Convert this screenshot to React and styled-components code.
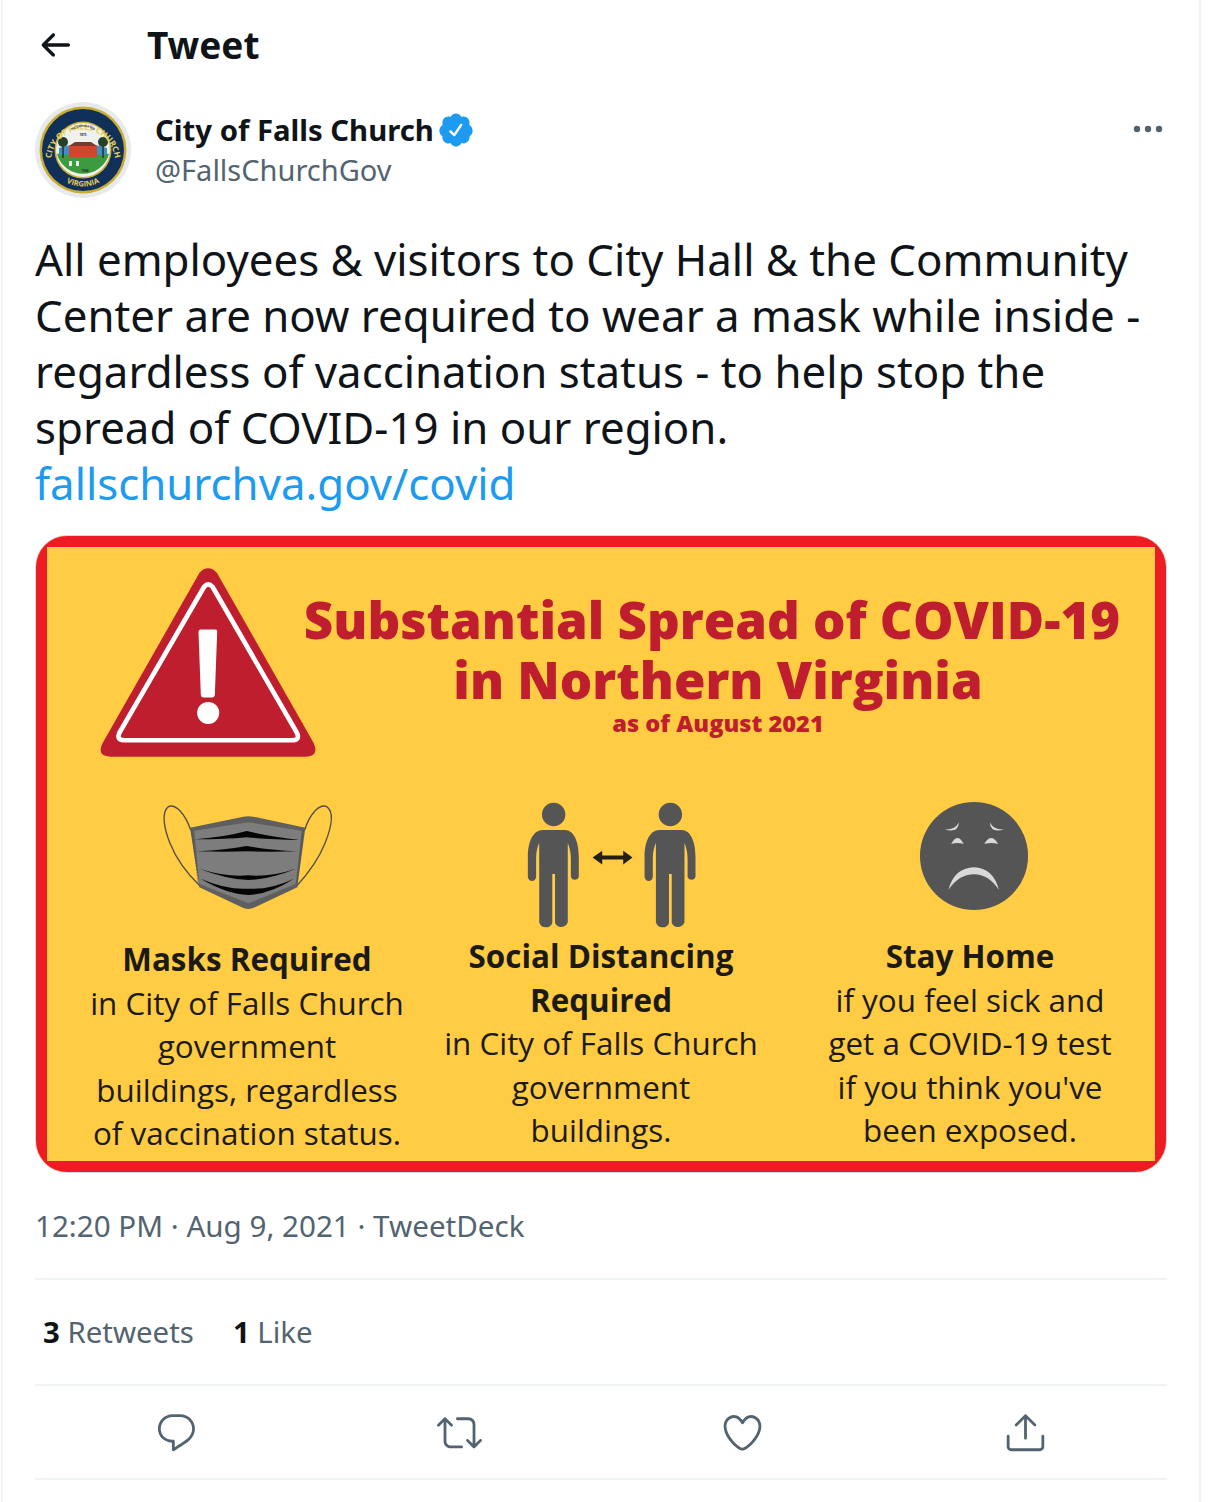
import React from "react";
import styled, { createGlobalStyle } from "styled-components";

const GlobalStyle = createGlobalStyle`
  html, body { margin: 0; padding: 0; background: #fff; }
  body { font-family: "Noto Sans", "Liberation Sans", sans-serif; color: #0f1419; }
  * { box-sizing: border-box; }
`;

// Main timeline column
const Column = styled.div`
  width: 1200px;
  height: 1502px;
  margin-left: 1px;
  padding: 0 32px;
  border-left: 2px solid #eff3f4;
  border-right: 2px solid #eff3f4;
  overflow: hidden;
`;

const Header = styled.header`
  height: 90px;
  display: flex;
  align-items: center;
`;

const BackIcon = styled.svg`
  width: 40px;
  height: 40px;
  margin-right: 72px;
  fill: #0f1419;
`;

const HeaderTitle = styled.h1`
  margin: 0;
  font-size: 37px;
  line-height: 46px;
  font-weight: 700;
`;

const AuthorRow = styled.div`
  display: flex;
  align-items: flex-start;
  gap: 24px;
  margin-top: 12px;
`;

const Avatar = styled.svg`
  width: 96px;
  height: 96px;
  flex: none;
`;

const AuthorText = styled.div`
  flex: 1;
  padding-top: 7px;
`;

const NameRow = styled.div`
  display: flex;
  align-items: center;
  gap: 3px;
  height: 41px;
  font-size: 29.3px;
  font-weight: 700;
`;

const Verified = styled.svg`
  width: 38px;
  height: 38px;
  fill: #1d9bf0;
`;

const Handle = styled.div`
  height: 40px;
  line-height: 40px;
  font-size: 29px;
  color: #536471;
`;

const MoreIcon = styled.svg`
  width: 34px;
  height: 12px;
  margin-top: 21px;
  margin-right: 2px;
  fill: #536471;
`;

const TweetText = styled.p`
  margin: 33px 0 24px;
  font-size: 43.8px;
  line-height: 56px;
`;

const TweetLink = styled.span`
  color: #1d9bf0;
`;

// Infographic card
const Card = styled.div`
  height: 638px;
  border: 1px solid #cfd9de;
  border-radius: 32px;
  overflow: hidden;
`;

const Poster = styled.div`
  height: 100%;
  background: #ffcc44;
  border: 11px solid #ed1c24;
  font-family: "Open Sans", "Liberation Sans", sans-serif;
`;

const PosterHead = styled.div`
  display: flex;
  align-items: flex-start;
  padding: 19px 0 0 53px;
`;

const Warning = styled.svg`
  width: 217px;
  height: 192px;
  flex: none;
`;

const Headline = styled.div`
  width: 830px;
  margin: 23px 0 0 -20px;
  text-align: center;
  color: #be1e2d;
  font-weight: 800;
`;

const HeadLine = styled.div`
  padding-left: ${({ $indent }) => $indent || 0}px;
  font-size: 51px;
  line-height: 60px;
`;

const AsOf = styled.div`
  margin-top: 2px;
  padding-left: 12px;
  font-size: 23.6px;
  line-height: 24px;
`;

const PosterBody = styled.div`
  display: grid;
  grid-template-columns: 320px 320px 320px;
  column-gap: 34px;
  margin-top: 31px;
  padding-left: 40px;
`;

const Notice = styled.div`
  width: 320px;
  text-align: center;
  color: #1c1a14;
  font-size: 31.4px;
  line-height: 43.5px;
  margin-left: ${({ $shift }) => $shift || 0}px;
`;

const NoticeIcon = styled.svg`
  display: block;
  width: ${({ $w }) => $w}px;
  height: ${({ $h }) => $h}px;
  margin: ${({ $top }) => $top || 0}px auto ${({ $bottom }) => $bottom || 0}px;
`;

const NoticeTitle = styled.div`
  font-weight: 700;
  margin-top: ${({ $gap }) => $gap || 0}px;
`;

const Meta = styled.div`
  height: 107px;
  display: flex;
  align-items: center;
  font-size: 29.6px;
  color: #536471;
  border-bottom: 2px solid #eff3f4;
`;

const Stats = styled.div`
  height: 106px;
  display: flex;
  align-items: center;
  gap: 39px;
  padding-left: 8px;
  font-size: 29.4px;
  color: #536471;
  border-bottom: 2px solid #eff3f4;
`;

const Count = styled.b`
  color: #0f1419;
`;

const Actions = styled.div`
  height: 94px;
  display: grid;
  grid-template-columns: repeat(4, 283px);
  border-bottom: 2px solid #eff3f4;
`;

const Action = styled.div`
  display: flex;
  align-items: center;
  justify-content: center;
`;

const ActionIcon = styled.svg`
  width: 45px;
  height: 45px;
  fill: #536471;
`;

const Seal = () => (
  <Avatar viewBox="0 0 96 96">
    <defs>
      <path id="sealTop" d="M16.5 54 A32 32 0 0 1 79.5 54" />
      <path id="sealBottom" d="M12 56 A37 37 0 0 0 84 56" />
      <path id="sealInner" d="M27 46 A21 21 0 0 1 69 46" />
    </defs>
    <circle cx="48" cy="48" r="48" fill="#e7eaeb" />
    <circle cx="48" cy="48" r="43.5" fill="#c9ad33" />
    <circle cx="48" cy="48" r="41" fill="#10305a" />
    <circle cx="48" cy="48" r="28.5" fill="#c9ad33" />
    <circle cx="48" cy="48" r="27" fill="#eef1ec" />
    <path d="M22 52 A27 27 0 0 0 74 52 Q48 46 22 52Z" fill="#3c9a3f" />
    <path d="M24 46 Q48 38 72 46 V53 H24Z" fill="#3f8fc2" />
    <rect x="34" y="44" width="28" height="11" fill="#d2452c" />
    <path d="M34 44 L40 40 H56 L62 44Z" fill="#7a3a2a" />
    <path d="M28 56 V42 M68 56 V42" stroke="#23361f" strokeWidth="1.5" />
    <circle cx="28" cy="40" r="5" fill="#25402c" />
    <circle cx="68" cy="40" r="5" fill="#25402c" />
    <rect x="34" y="59" width="3" height="5" fill="#e8e8e8" />
    <rect x="41" y="59" width="3" height="5" fill="#e8e8e8" />
    <text fontFamily="Open Sans" fontSize="8.2" fontWeight="700" fill="#e5cf55">
      <textPath href="#sealTop" startOffset="50%" textAnchor="middle">CITY OF FALLS CHURCH</textPath>
    </text>
    <text fontFamily="Open Sans" fontSize="7.6" fontWeight="700" fill="#e5cf55">
      <textPath href="#sealBottom" startOffset="50%" textAnchor="middle">VIRGINIA</textPath>
    </text>
    <text fontFamily="Open Sans" fontSize="3" fontWeight="700" fill="#26331f">
      <textPath href="#sealInner" startOffset="50%" textAnchor="middle">INCORPORATED</textPath>
    </text>
    <text x="48" y="34" textAnchor="middle" fontFamily="Open Sans" fontSize="3" fontWeight="700" fill="#26331f">1875</text>
    <text x="50" y="70" textAnchor="middle" fontFamily="Open Sans" fontSize="3" fontWeight="700" fill="#26331f">1948</text>
  </Avatar>
);

const WarningSign = () => (
  <Warning viewBox="210 110 650 575">
    <path
      d="M508 130 Q534 104 560 130 L850 640 Q868 680 825 681 H242 Q198 680 218 640Z"
      fill="#be1e2d"
    />
    <path
      d="M522 172 Q534 158 547 172 L800 610 Q810 632 785 632 H285 Q258 632 268 610Z"
      fill="none"
      stroke="#fff"
      strokeWidth="14"
    />
    <path d="M511 300 H555 Q562 300 561 308 L554 496 Q553 504 546 504 H520 Q513 504 512 496 L505 308 Q505 300 511 300Z" fill="#fff" />
    <circle cx="534" cy="550" r="33" fill="#fff" />
  </Warning>
);

const MaskIcon = () => (
  <NoticeIcon $w={214} $h={140} viewBox="0 -3 642 420">
    <path d="M152 120 C135 70 105 40 85 50 C65 65 70 110 90 160 C110 210 140 250 180 288" fill="none" stroke="#4f4f45" strokeWidth="4" />
    <path d="M494 120 C510 70 540 40 560 50 C582 65 575 110 555 160 C535 210 505 250 470 288" fill="none" stroke="#4f4f45" strokeWidth="4" />
    <path d="M150 113 L310 80 Q325 78 340 80 L496 113 L472 292 L345 352 Q325 362 305 352 L178 292Z" fill="#5f5f5f" />
    <path d="M163 122 L325 97 L485 122 L467 282 L325 340 L178 282Z" fill="#7d7d7d" />
    <path d="M165 148 Q260 140 320 123 Q390 140 480 150 Q390 148 320 142 Q260 148 165 148Z" fill="#050505" />
    <path d="M170 184 Q260 180 320 168 Q390 180 472 184 Q390 186 320 184 Q260 186 170 184Z" fill="#050505" />
    <path d="M178 236 Q260 262 325 256 Q390 262 468 236 Q390 268 325 270 Q260 268 178 236Z" fill="#050505" />
    <path d="M182 266 Q260 300 325 296 Q390 300 462 266 Q390 312 325 315 Q260 312 182 266Z" fill="#050505" />
    <path d="M155 120 L175 282 M490 120 L470 282" fill="none" stroke="#3c4650" strokeWidth="2" strokeDasharray="5 4" />
  </NoticeIcon>
);

const PERSON =
  "M95 122 H160 C185 122 200 155 200 200 V258 A12 12 0 0 1 177 258 V205 C177 185 172 170 168 160 V390 A20 20 0 0 1 131 392 V250 H123 V392 A20 20 0 0 1 85 390 V160 C80 170 76 185 76 205 V258 A12 12 0 0 1 52 258 V200 C52 155 68 122 95 122Z";

const DistanceIcon = () => (
  <NoticeIcon $w={200} $h={145} viewBox="-26 3 581 421">
    <circle cx="127" cy="77" r="34" fill="#555" />
    <path d={PERSON} fill="#555" />
    <path d="M240 202 L268 182 V196 H329 V182 L356 202 L329 222 V208 H268 V222Z" fill="#231f14" />
    <g transform="translate(339 0)">
      <circle cx="127" cy="77" r="34" fill="#555" />
      <path d={PERSON} fill="#555" />
    </g>
  </NoticeIcon>
);

const FaceIcon = () => (
  <NoticeIcon $w={128} $h={116} $top={9} $bottom={20} viewBox="1150.5 28.6 371.7 337">
    <circle cx="1348" cy="197" r="157" fill="#555" />
    <g fill="#d9d9d9">
      <path d="M1262 120 Q1292 122 1304 100 Q1302 132 1262 120Z" />
      <path d="M1394 100 Q1406 122 1436 120 Q1396 132 1394 100Z" />
      <path d="M1282 162 Q1300 128 1318 162 Q1300 156 1282 162Z" />
      <path d="M1378 162 Q1398 128 1418 162 Q1398 156 1378 162Z" />
      <path d="M1274 295 Q1290 232 1348 230 Q1404 232 1420 295 Q1390 250 1348 250 Q1304 250 1274 295Z" />
    </g>
  </NoticeIcon>
);

const App = () => (
  <>
    <GlobalStyle />
    <Column>
      <Header>
        <BackIcon viewBox="0 0 24 24">
          <path d="M20 11H7.414l4.293-4.293c.39-.39.39-1.023 0-1.414s-1.023-.39-1.414 0l-6 6c-.39.39-.39 1.023 0 1.414l6 6c.195.195.45.293.707.293s.512-.098.707-.293c.39-.39.39-1.023 0-1.414L7.414 13H20c.553 0 1-.447 1-1s-.447-1-1-1z" />
        </BackIcon>
        <HeaderTitle>Tweet</HeaderTitle>
      </Header>

      <AuthorRow>
        <Seal />
        <AuthorText>
          <NameRow>
            City of Falls Church
            <Verified viewBox="0 0 24 24">
              <path d="M22.5 12.5c0-1.58-.875-2.95-2.148-3.6.154-.435.238-.905.238-1.4 0-2.21-1.71-3.998-3.818-3.998-.47 0-.92.084-1.336.25C14.818 2.415 13.51 1.5 12 1.5s-2.816.917-3.437 2.25c-.415-.165-.866-.25-1.336-.25-2.11 0-3.818 1.79-3.818 4 0 .494.083.964.237 1.4-1.272.65-2.147 2.018-2.147 3.6 0 1.495.782 2.798 1.942 3.486-.02.17-.032.34-.032.514 0 2.21 1.708 4 3.818 4 .47 0 .92-.086 1.335-.25.62 1.334 1.926 2.25 3.437 2.25 1.512 0 2.818-.916 3.437-2.25.415.163.865.248 1.336.248 2.11 0 3.818-1.79 3.818-4 0-.174-.012-.344-.033-.513 1.158-.687 1.943-1.99 1.943-3.484zm-6.616-3.334l-4.334 6.5c-.145.217-.382.334-.625.334-.143 0-.288-.04-.416-.126l-.115-.094-2.415-2.415c-.293-.293-.293-.768 0-1.06s.768-.294 1.06 0l1.77 1.767 3.825-5.74c.23-.345.696-.436 1.04-.207.346.23.44.696.21 1.04z" />
            </Verified>
          </NameRow>
          <Handle>@FallsChurchGov</Handle>
        </AuthorText>
        <MoreIcon viewBox="0 0 34 12">
          <circle cx="6" cy="6" r="3.2" />
          <circle cx="17" cy="6" r="3.2" />
          <circle cx="28" cy="6" r="3.2" />
        </MoreIcon>
      </AuthorRow>

      <TweetText>
        All employees &amp; visitors to City Hall &amp; the Community
        <br />
        Center are now required to wear a mask while inside -
        <br />
        regardless of vaccination status - to help stop the
        <br />
        spread of COVID-19 in our region.
        <br />
        <TweetLink>fallschurchva.gov/covid</TweetLink>
      </TweetText>

      <Card>
        <Poster>
          <PosterHead>
            <WarningSign />
            <Headline>
              <HeadLine>Substantial Spread of COVID-19</HeadLine>
              <HeadLine $indent={12}>in Northern Virginia</HeadLine>
              <AsOf>as of August 2021</AsOf>
            </Headline>
          </PosterHead>
          <PosterBody>
            <Notice>
              <MaskIcon />
              <NoticeTitle $gap={8}>Masks Required</NoticeTitle>
              in City of Falls Church
              <br />
              government
              <br />
              buildings, regardless
              <br />
              of vaccination status.
            </Notice>
            <Notice>
              <DistanceIcon />
              <NoticeTitle>Social Distancing</NoticeTitle>
              <NoticeTitle>Required</NoticeTitle>
              in City of Falls Church
              <br />
              government
              <br />
              buildings.
            </Notice>
            <Notice $shift={15}>
              <FaceIcon />
              <NoticeTitle>Stay Home</NoticeTitle>
              if you feel sick and
              <br />
              get a COVID-19 test
              <br />
              if you think you've
              <br />
              been exposed.
            </Notice>
          </PosterBody>
        </Poster>
      </Card>

      <Meta>12:20 PM · Aug 9, 2021 · TweetDeck</Meta>

      <Stats>
        <span>
          <Count>3</Count> Retweets
        </span>
        <span>
          <Count>1</Count> Like
        </span>
      </Stats>

      <Actions>
        <Action>
          <ActionIcon viewBox="0 0 24 24">
            <path d="M14.046 2.242l-4.148-.01h-.002c-4.374 0-7.8 3.427-7.8 7.802 0 4.098 3.186 7.206 7.465 7.37v3.828c0 .108.044.286.12.403.142.225.384.347.632.347.138 0 .277-.038.402-.118.264-.168 6.473-4.14 8.088-5.506 1.902-1.61 3.04-3.97 3.043-6.312v-.017c-.006-4.367-3.43-7.787-7.8-7.788zm3.787 12.972c-1.134.96-4.862 3.405-6.772 4.643V16.67c0-.414-.335-.75-.75-.75h-.396c-3.66 0-6.318-2.476-6.318-5.886 0-3.534 2.768-6.302 6.3-6.302l4.147.01h.002c3.532 0 6.3 2.766 6.302 6.296-.003 1.91-.942 3.844-2.514 5.176z" />
          </ActionIcon>
        </Action>
        <Action>
          <ActionIcon viewBox="0 0 24 24">
            <path d="M23.77 15.67c-.292-.293-.767-.293-1.06 0l-2.22 2.22V7.65c0-2.068-1.683-3.75-3.75-3.75h-5.85c-.414 0-.75.336-.75.75s.336.75.75.75h5.85c1.24 0 2.25 1.01 2.25 2.25v10.24l-2.22-2.22c-.293-.293-.768-.293-1.06 0s-.294.768 0 1.06l3.5 3.5c.145.147.337.22.53.22s.383-.072.53-.22l3.5-3.5c.294-.292.294-.767 0-1.06zm-10.66 3.28H7.26c-1.24 0-2.25-1.01-2.25-2.25V6.46l2.22 2.22c.148.147.34.22.532.22s.384-.073.53-.22c.293-.293.293-.768 0-1.06l-3.5-3.5c-.293-.294-.768-.294-1.06 0l-3.5 3.5c-.294.292-.294.767 0 1.06s.767.293 1.06 0l2.22-2.22V16.7c0 2.068 1.683 3.75 3.75 3.75h5.85c.414 0 .75-.336.75-.75s-.337-.75-.75-.75z" />
          </ActionIcon>
        </Action>
        <Action>
          <ActionIcon viewBox="0 0 24 24">
            <path d="M12 21.638h-.014C9.403 21.59 1.95 14.856 1.95 8.478c0-3.064 2.525-5.754 5.403-5.754 2.29 0 3.83 1.58 4.646 2.73.814-1.148 2.354-2.73 4.645-2.73 2.88 0 5.404 2.69 5.404 5.755 0 6.376-7.454 13.11-10.037 13.157H12zM7.354 4.225c-2.08 0-3.903 1.988-3.903 4.255 0 5.74 7.034 11.596 8.55 11.658 1.518-.062 8.55-5.917 8.55-11.658 0-2.267-1.823-4.255-3.903-4.255-2.528 0-3.94 2.936-3.952 2.965-.23.562-1.156.562-1.387 0-.014-.03-1.425-2.965-3.954-2.965z" />
          </ActionIcon>
        </Action>
        <Action>
          <ActionIcon viewBox="0 0 24 24">
            <path d="M17.53 7.47l-5-5c-.293-.293-.768-.293-1.06 0l-5 5c-.294.293-.294.768 0 1.06s.767.294 1.06 0l3.72-3.72V15c0 .414.336.75.75.75s.75-.336.75-.75V4.81l3.72 3.72c.146.147.338.22.53.22s.384-.072.53-.22c.293-.293.293-.767 0-1.06z" />
            <path d="M19.708 21.944H4.292C3.028 21.944 2 20.916 2 19.652V14c0-.414.336-.75.75-.75s.75.336.75.75v5.652c0 .437.355.792.792.792h15.416c.437 0 .792-.355.792-.792V14c0-.414.336-.75.75-.75s.75.336.75.75v5.652c0 1.264-1.028 2.292-2.292 2.292z" />
          </ActionIcon>
        </Action>
      </Actions>
    </Column>
  </>
);

export default App;
